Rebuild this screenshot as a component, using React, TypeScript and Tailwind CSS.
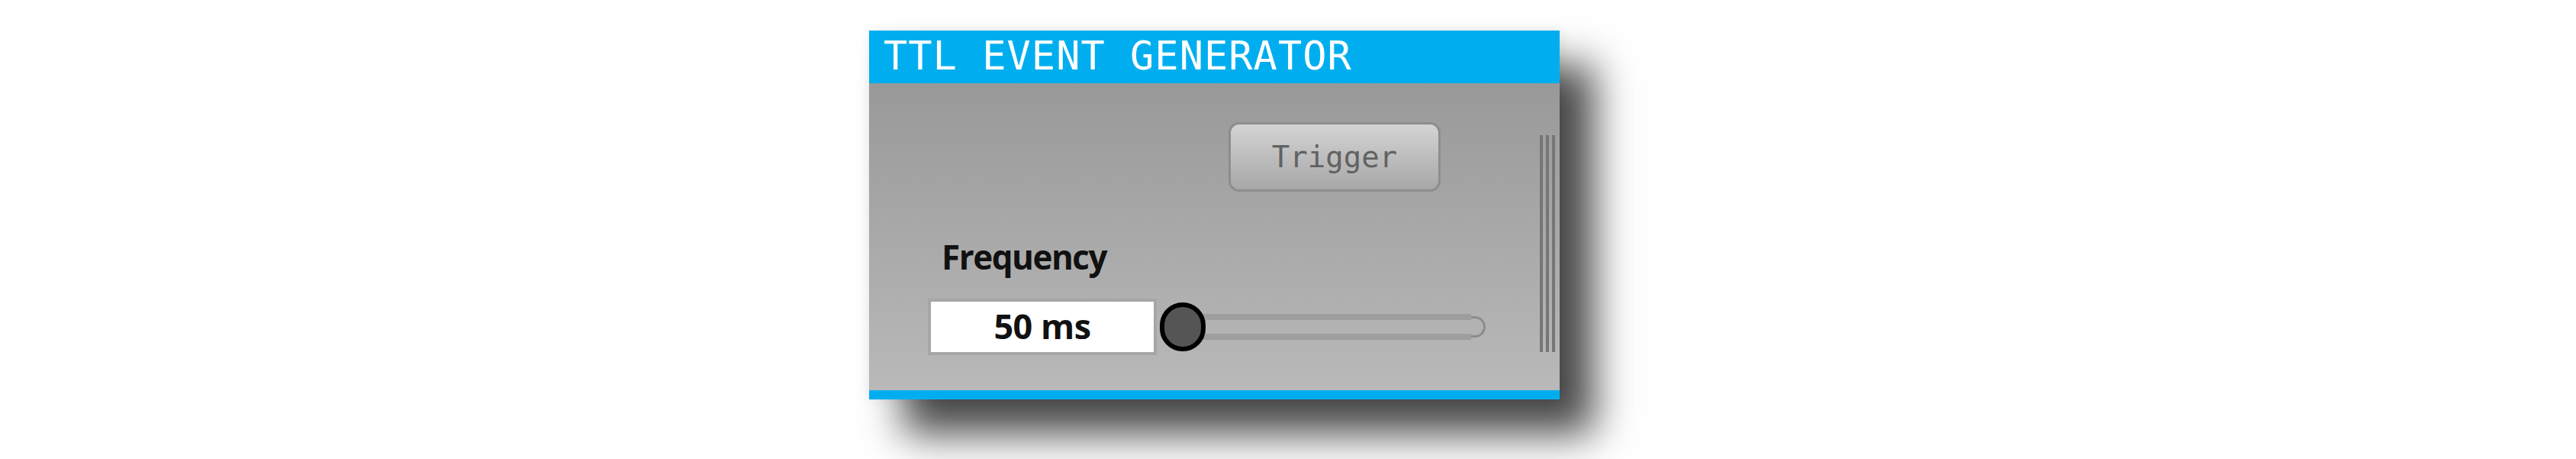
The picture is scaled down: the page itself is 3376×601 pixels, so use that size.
const VerticalGrip = () => (
    <div className="flex gap-[4px] pt-[68px] pr-[6px]">
        <div className="w-[4px] h-[284px] bg-[#767676]" />
        <div className="w-[4px] h-[284px] bg-[#767676]" />
        <div className="w-[4px] h-[284px] bg-[#767676]" />
    </div>
);

const FrequencySlider = () => (
    <div className="flex items-center">
        <div className="relative z-10 w-[60px] h-[64px] rounded-full border-[6px] border-black bg-[#555555]" />
        <div className="-ml-[20px] w-[368px] h-[34px] border-y-[8px] border-[#9e9e9e]" />
        <div className="w-[19px] h-[28px] rounded-r-full border-[3px] border-l-0 border-[#8c8c8c]" />
    </div>
);

export default function App() {
    return (
        <div className="min-h-[601px] w-full bg-white pl-[1139px] pt-[40px]">
            <div className="w-[905px] flex flex-col shadow-[45px_45px_50px_rgba(0,0,0,0.72),0_0_14px_rgba(0,0,0,0.08)]">
                <div className="h-[69px] bg-[#00aeef] pl-[19px] pt-[7px]">
                    <span className="font-['DejaVu_Sans_Mono',monospace] text-[52px] leading-[52px] tracking-[1px] text-white">
                        TTL EVENT GENERATOR
                    </span>
                </div>

                <div className="h-[402px] flex bg-linear-to-b from-[#999999] to-[#b9b9b9]">
                    <div className="flex-1 flex flex-col">
                        <button className="ml-[471px] mt-[51px] w-[278px] h-[91px] flex items-center justify-center rounded-[14px] border-[3px] border-[#8d8d8d] bg-linear-to-b from-[#d4d4d4] to-[#a7a7a7] font-['DejaVu_Sans_Mono',monospace] text-[39px] leading-none text-[#626262]">
                            Trigger
                        </button>

                        {/* label is narrower than Open Sans bold, so squeeze a bit */}
                        <p className="ml-[95px] mt-[63px] font-['Open_Sans',sans-serif] font-bold text-[44px] leading-[44px] tracking-[-1.5px] text-[#111111]">
                            Frequency
                        </p>

                        <div className="ml-[77px] mt-[33px] flex items-center gap-[4px]">
                            <div className="w-[300px] h-[74px] border-[4px] border-[#a6a6a6] bg-white flex items-center justify-center pb-[4px] font-['Open_Sans',sans-serif] font-bold text-[45px] leading-[45px] tracking-[-0.5px] text-[#111111]">
                                50 ms
                            </div>
                            <FrequencySlider />
                        </div>
                    </div>
                    <VerticalGrip />
                </div>

                <div className="h-[12px] bg-[#00aeef]" />
            </div>
        </div>
    );
}
